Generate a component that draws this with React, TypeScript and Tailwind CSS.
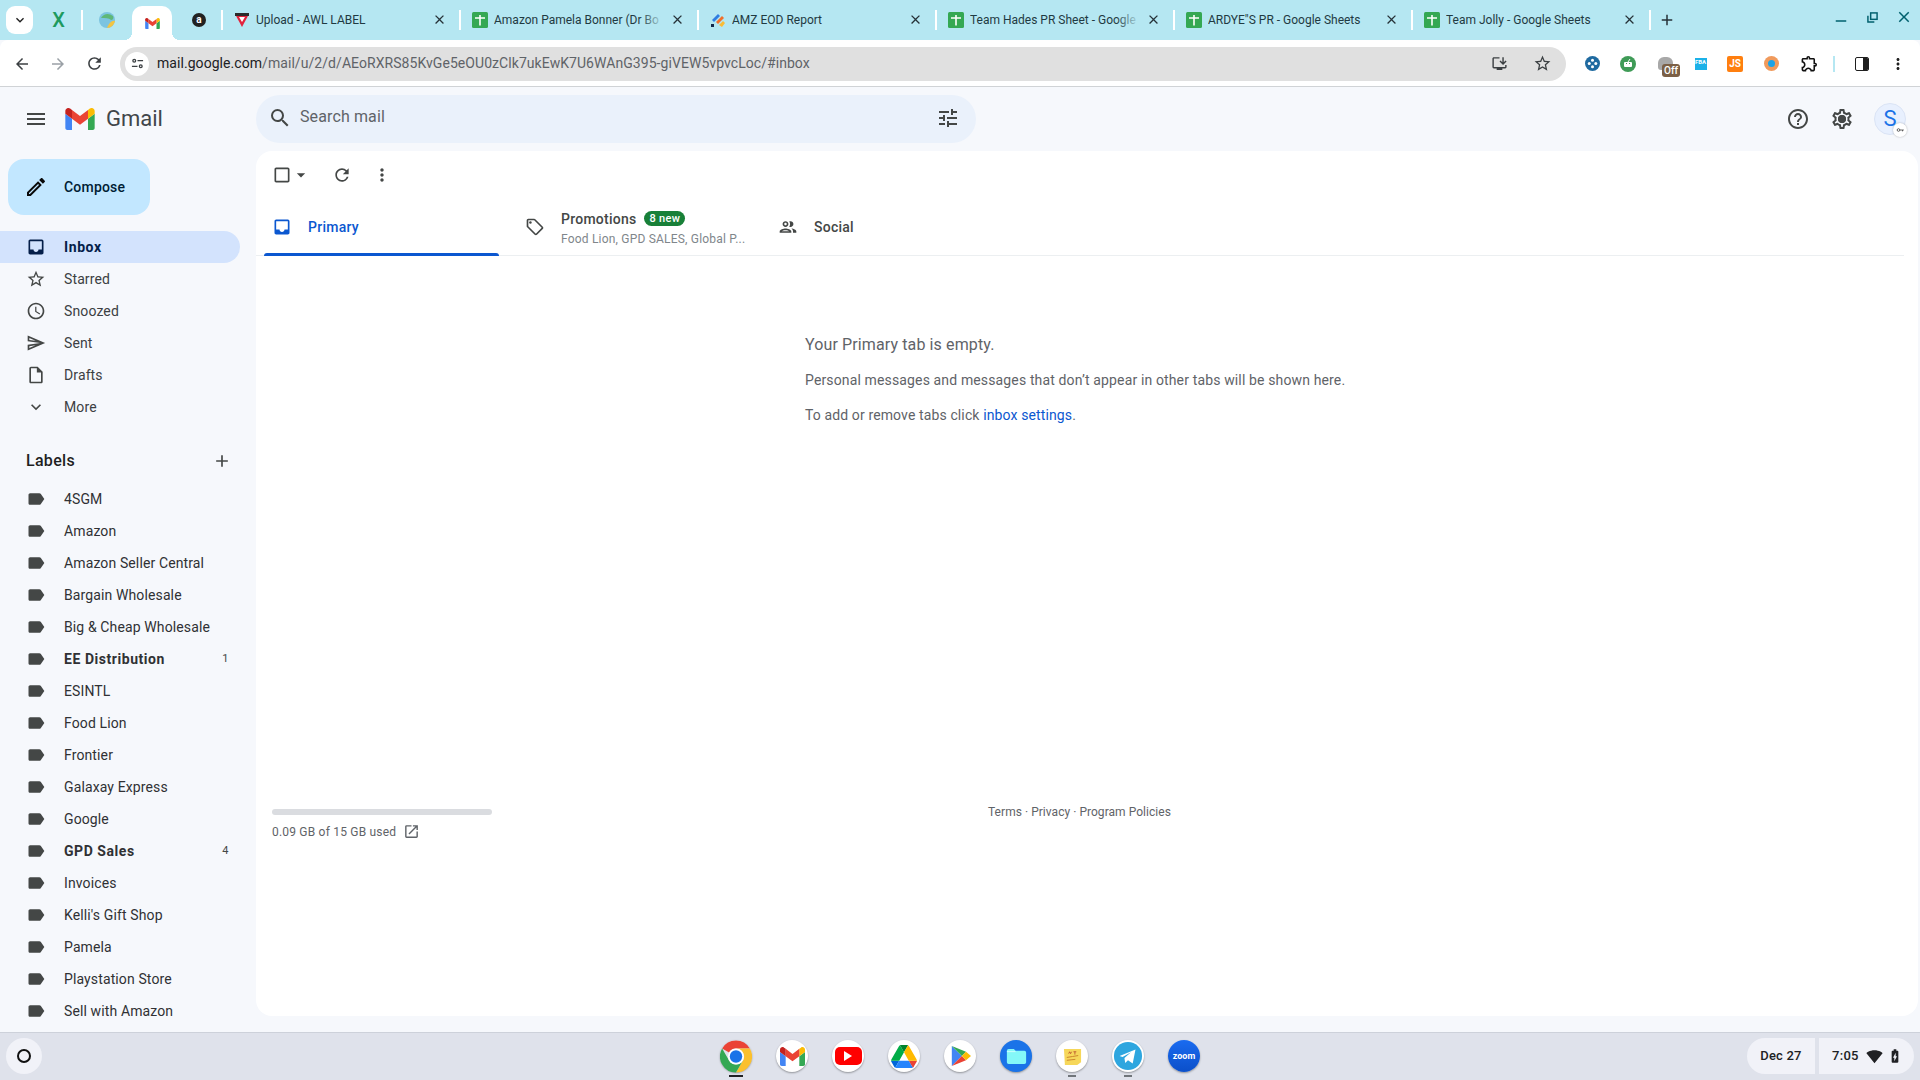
import React from "react";
import {
  MdAdd, MdArrowBack, MdArrowDropDown, MdArrowForward, MdCheckBoxOutlineBlank, MdClose,
  MdExpandMore, MdHelpOutline, MdInbox, MdKeyboardArrowDown, MdLabel, MdMenu, MdMoreVert, MdOpenInNew, MdOutlineAccessTime,
  MdOutlineBatteryChargingFull, MdOutlineEdit, MdOutlineExtension, MdOutlineInsertDriveFile, MdOutlineInstallDesktop, MdOutlineLocalOffer, MdOutlinePeople,
  MdOutlineSend, MdOutlineSettings, MdOutlineStarBorder, MdRefresh, MdRemove, MdSearch, MdSignalWifi4Bar, MdTune,
} from "react-icons/md";

function GmailM({ className }: { className: string }) {
  return (
    <svg viewBox="52 42 88 66" className={className}>
      <path fill="#4285f4" d="M58 108h14V74L52 59v43c0 3.32 2.69 6 6 6" />
      <path fill="#34a853" d="M120 108h14c3.32 0 6-2.69 6-6V59l-20 15" />
      <path fill="#fbbc04" d="M120 48v26l20-15v-8c0-7.42-8.47-11.65-14.4-7.2" />
      <path fill="#ea4335" d="M72 74V48l24 18 24-18v26L96 92" />
      <path fill="#c5221f" d="M52 51v8l20 15V48l-5.6-4.2c-5.94-4.45-14.4-.22-14.4 7.2" />
    </svg>
  );
}

function SheetIcon() {
  return (
    <svg viewBox="0 0 16 16" className="h-4 w-4 shrink-0">
      <rect width="16" height="16" rx="1.5" fill="#34a853" />
      <path d="M3 6h10M8 3v10.500" stroke="#fff" strokeWidth="1.6" />
    </svg>
  );
}

function Tab({ icon, title, fade }: { icon: React.ReactNode; title: string; fade?: boolean }) {
  return (
    <div className="flex h-[40px] w-[238px] shrink-0 items-center pb-[1px]">
      <div className="h-[20px] w-[2px] shrink-0 bg-white" />
      <div className="ml-[11px] flex h-4 w-4 shrink-0 items-center justify-center">{icon}</div>
      <div className="relative ml-[6px] w-[170px] overflow-hidden whitespace-nowrap text-[12px] text-[#1f3a42]">
        {title}
        {fade && <div className="absolute inset-y-0 right-0 w-[24px] bg-gradient-to-l from-[#b5e7f2] to-transparent" />}
      </div>
      <MdClose className="ml-[6px] shrink-0 text-[#263238]" size={15} />
    </div>
  );
}

function Chrome() {
  return (
    <svg viewBox="0 0 32 32" className="h-[33px] w-[33px]">
      <path fill="#ea4335" d="M16 0A16 16 0 0 1 29.86 8H16A8 8 0 0 0 9.07 12L2.14 8A16 16 0 0 1 16 0Z" />
      <path fill="#fbc02d" d="M29.86 8A16 16 0 0 1 16 32L22.93 20A8 8 0 0 0 16 8Z" />
      <path fill="#34a853" d="M16 32A16 16 0 0 1 2.14 8L9.07 20A8 8 0 0 0 22.93 20Z" />
      <circle cx="16" cy="16" r="8" fill="#fff" />
      <circle cx="16" cy="16" r="6.2" fill="#1a73e8" />
    </svg>
  );
}

function Dock({ children, dot, className = "bg-white" }: { children: React.ReactNode; dot?: string; className?: string }) {
  return (
    <div className="relative flex h-[46px] w-[32px] items-center justify-center">
      <div className={`flex h-[32px] w-[32px] items-center justify-center rounded-full shadow-[0_1px_2px_rgba(0,0,0,0.35)] ${className}`}>{children}</div>
      {dot && <div className={`absolute bottom-[2px] left-1/2 h-[2px] -translate-x-1/2 ${dot}`} />}
    </div>
  );
}

const nav = [
  { label: "Starred", Icon: MdOutlineStarBorder },
  { label: "Snoozed", Icon: MdOutlineAccessTime },
  { label: "Sent", Icon: MdOutlineSend },
  { label: "Drafts", Icon: MdOutlineInsertDriveFile },
  { label: "More", Icon: MdKeyboardArrowDown },
];

const labels: [string, string?][] = [
  ["4SGM"], ["Amazon"], ["Amazon Seller Central"], ["Bargain Wholesale"], ["Big & Cheap Wholesale"], ["EE Distribution", "1"],
  ["ESINTL"], ["Food Lion"], ["Frontier"], ["Galaxay Express"], ["Google"], ["GPD Sales", "4"], ["Invoices"],
  ["Kelli's Gift Shop"], ["Pamela"], ["Playstation Store"], ["Sell with Amazon"],
];

export default function App() {
  return (
    <div className="flex h-screen w-full flex-col overflow-hidden bg-[#f6f8fc] font-['Roboto',sans-serif] text-[#202124]">
      {/* Tab strip */}
      <div className="flex h-[40px] shrink-0 items-center bg-[#b5e7f2] pl-[6px]">
        <div className="flex h-[28px] w-[27px] shrink-0 items-center justify-center rounded-[9px] bg-white">
          <MdExpandMore size={16} className="text-[#1f1f1f]" />
        </div>
        <div className="flex h-[40px] w-[50px] shrink-0 items-center justify-end">
          <span className="mr-[16px] text-[20px] font-medium leading-none text-[#1d9a5f]">X</span>
          <div className="h-[20px] w-[2px] bg-white" />
        </div>
        <div className="flex w-[49px] shrink-0 items-center justify-center pr-[2px]">
          <svg viewBox="0 0 16 16" className="h-4 w-4">
            <circle cx="8" cy="8" r="8" fill="#7cc4e0" />
            <path d="M2 6c3-5 8-5 12-2 1 2 0 4-2 4-2-2-6-2-10-2Z" fill="#5fb878" />
            <path d="M8 16c4 0 7-3 8-7-3-1-6 2-8 7Z" fill="#f4c542" />
          </svg>
        </div>
        <div className="relative flex h-[34px] w-[40px] shrink-0 items-center justify-center self-end rounded-t-[10px] bg-white">
          <GmailM className="h-[11px] w-[15px]" />
          <div className="absolute bottom-0 -left-[8px] h-[8px] w-[8px] bg-[radial-gradient(circle_at_0_0,#b5e7f2_8px,#fff_8px)]" />
          <div className="absolute bottom-0 -right-[8px] h-[8px] w-[8px] bg-[radial-gradient(circle_at_100%_0,#b5e7f2_8px,#fff_8px)]" />
        </div>
        <div className="flex w-[49px] shrink-0 items-center justify-end">
          <div className="mr-[15px] flex h-[14px] w-[14px] items-center justify-center rounded-full bg-[#222] text-[10px] font-bold leading-none text-white">a</div>
        </div>
        <Tab
          title="Upload - AWL LABEL"
          icon={
            <svg viewBox="0 0 16 16" className="h-4 w-4">
              <path d="M1 2h14l-7 13Z" fill="#e2233d" />
              <path d="M1 1h14v3H1Z" fill="#2b2b2b" />
              <path d="M5 5h6L8 10Z" fill="#fff" />
            </svg>
          }
        />
        <Tab title="Amazon Pamela Bonner (Dr Bo" fade icon={<SheetIcon />} />
        <Tab
          title="AMZ EOD Report"
          icon={
            <svg viewBox="0 0 16 16" className="h-4 w-4">
              <path d="M2 8l6-6 2 2-6 6Z" fill="#2f7de1" />
              <path d="M6 10l6-6 2 2-6 6Z" fill="#f2702a" />
              <path d="M9 13l4-4 2 2-3 4Z" fill="#fbbc34" />
              <path d="M1 12h3v3H1Z" fill="#12284c" />
            </svg>
          }
        />
        <Tab title="Team Hades PR Sheet - Google" fade icon={<SheetIcon />} />
        <Tab title={'ARDYE"S PR - Google Sheets'} icon={<SheetIcon />} />
        <Tab title="Team Jolly - Google Sheets" icon={<SheetIcon />} />
        <div className="h-[20px] w-[2px] shrink-0 bg-white" />
        <MdAdd size={18} className="ml-[7px] shrink-0 text-[#263238]" />
        <div className="ml-auto flex h-[40px] items-center pb-[2px] text-[#00606e]">
          <MdRemove size={18} className="mr-[17px] mt-[4px]" />
          <svg viewBox="0 0 12 12" className="mr-[17px] mb-[4px] h-[11px] w-[11px]" fill="none" stroke="currentColor" strokeWidth="1.6">
            <rect x="4" y="1" width="7" height="7" />
            <path d="M1 4v7h7" />
          </svg>
          <MdClose size={18} className="mr-[7px] mb-[4px]" />
        </div>
      </div>

      {/* Toolbar */}
      <div className="flex h-[47px] shrink-0 items-center rounded-t-[8px] border-b border-[#d0d3d6] bg-white pt-[1px]">
        <div className="flex w-[120px] shrink-0 items-center text-[#3c4043]">
          <MdArrowBack size={18} className="ml-[13px]" />
          <MdArrowForward size={18} className="ml-[18px] text-[#9aa0a6]" />
          <MdRefresh size={19} className="ml-[18px]" />
        </div>
        <div className="flex h-[34px] w-[1446px] shrink-0 items-center rounded-full bg-[#e0e0e0] pl-[5px] pr-[14px]">
          <div className="flex h-[24px] w-[24px] shrink-0 items-center justify-center rounded-full bg-white">
            <svg viewBox="0 0 14 14" className="h-[13px] w-[13px]" fill="none" stroke="#3c4043" strokeWidth="1.4">
              <circle cx="3.500" cy="4" r="1.500" />
              <path d="M7 4h6M1 10h6" />
              <circle cx="10.500" cy="10" r="1.500" />
            </svg>
          </div>
          <div className="ml-[8px] text-[14px] tracking-[0.06px] text-[#5f6368]">
            <span className="text-[#202124]">mail.google.com</span>/mail/u/2/d/AEoRXRS85KvGe5eOU0zClk7ukEwK7U6WAnG395-giVEW5vpvcLoc/#inbox
          </div>
          <MdOutlineInstallDesktop size={17} className="ml-auto mr-[25px] text-[#3c4043]" />
          <MdOutlineStarBorder size={19} className="text-[#3c4043]" />
        </div>
        <div className="ml-[8px] flex items-center">
          <div className="flex w-[36px] justify-center">
            <svg viewBox="0 0 16 16" className="h-[15px] w-[15px]">
              <circle cx="8" cy="8" r="8" fill="#1f6aa0" />
              <circle cx="8" cy="4.5" r="1.6" fill="#fff" />
              <circle cx="8" cy="11.5" r="1.6" fill="#fff" />
              <circle cx="4.5" cy="8" r="1.6" fill="#fff" />
              <circle cx="11.5" cy="8" r="1.6" fill="#fff" />
            </svg>
          </div>
          <div className="flex w-[36px] justify-center">
            <svg viewBox="0 0 16 16" className="h-4 w-4">
              <circle cx="8" cy="8" r="8" fill="#3f9b57" />
              <rect x="4" y="6" width="8" height="5" rx="1" fill="#fff" />
              <path d="M6 7.5h1M9 7.5h1" stroke="#3f9b57" strokeWidth="1" />
              <path d="M8 6l2-3" stroke="#fff" strokeWidth="1" />
            </svg>
          </div>
          <div className="relative flex w-[38px] justify-center">
            <div className="h-[13px] w-[15px] rounded-b-[3px] rounded-t-[6px] bg-[#a8a8a8]" />
            <div className="absolute -bottom-[7px] left-[16px] rounded-[3px] bg-[#7b5f45] px-[2px] text-[10px] font-medium leading-[13px] text-white">Off</div>
          </div>
          <div className="flex w-[33px] justify-center">
            <div className="flex h-[12px] w-[12px] items-start justify-center bg-[#1bb1e8] text-[6px] font-bold leading-[7px] text-white">FBA</div>
          </div>
          <div className="flex w-[36px] justify-center">
            <div className="flex h-[16px] w-[16px] items-center justify-center rounded-[2px] bg-[#ff7f0f] text-[10px] font-bold text-white">JS</div>
          </div>
          <div className="flex w-[36px] justify-center">
            <div className="flex h-[15px] w-[15px] items-center justify-center rounded-full bg-[#f09a5c]">
              <div className="h-[7px] w-[7px] rounded-full bg-[#1aa3e8]" />
            </div>
          </div>
          <div className="ml-[2px] flex w-[36px] justify-center">
            <MdOutlineExtension size={19} className="text-[#111]" />
          </div>
          <div className="ml-[6px] h-[16px] w-[2px] bg-[#b5e7f2]" />
          <div className="ml-[20px] flex h-[14px] w-[14px] overflow-hidden rounded-[2px] border-[1.5px] border-[#1f1f1f]">
            <div className="flex-1" />
            <div className="w-[5px] bg-[#1f1f1f]" />
          </div>
          <MdMoreVert size={18} className="ml-[20px] text-[#1f1f1f]" />
        </div>
      </div>

      {/* Gmail */}
      <div className="flex min-h-0 flex-1 tracking-[0.12px]">
        {/* Sidebar */}
        <div className="w-[256px] shrink-0 overflow-hidden">
          <div className="flex h-[64px] items-center pl-[24px]">
            <MdMenu size={24} className="text-[#444746]" />
            <GmailM className="ml-[17px] h-[22px] w-[30px]" />
            <span className="ml-[11px] text-[22px] leading-none tracking-normal text-[#41464a]">Gmail</span>
          </div>
          <div className="ml-[8px] mt-[8px] flex h-[56px] w-[142px] items-center rounded-[16px] bg-[#c2e7ff] pl-[16px] text-[14px] font-medium tracking-[0.2px] text-[#001d35]">
            <MdOutlineEdit size={24} className="text-[#0a0a0a]" />
            <span className="ml-[16px]">Compose</span>
          </div>
          <div className="mt-[16px] flex h-[32px] w-[240px] items-center rounded-r-full bg-[#d3e3fd] pl-[26px] text-[14px] font-bold tracking-[0.6px] text-[#041e49]">
            <MdInbox size={20} />
            <span className="ml-[18px]">Inbox</span>
          </div>
          {nav.map(({ label, Icon }) => (
            <div key={label} className="flex h-[32px] items-center pl-[26px] text-[14px] text-[#3c4043]">
              <Icon size={20} className="text-[#444746]" />
              <span className="ml-[18px]">{label}</span>
            </div>
          ))}
          <div className="mt-[18px] flex h-[40px] w-[240px] items-center justify-between pl-[26px] pr-[8px] text-[16px] font-medium tracking-[0.3px] text-[#1f1f1f]">
            <span>Labels</span>
            <MdAdd size={20} className="text-[#444746]" />
          </div>
          <div className="mt-[2px]">
            {labels.map(([name, count]) => (
              <div key={name} className={`flex h-[32px] w-[240px] items-center pl-[26px] pr-[11px] text-[14px] text-[#303134] ${count ? "font-bold tracking-[0.55px]" : ""}`}>
                <MdLabel size={20} className="text-[#444746]" />
                <span className="ml-[18px]">{name}</span>
                {count && <span className="ml-auto text-[11px] font-normal text-[#444746]">{count}</span>}
              </div>
            ))}
          </div>
        </div>

        {/* Right side */}
        <div className="flex min-w-0 flex-1 flex-col pr-[2px]">
          <div className="flex h-[64px] shrink-0 items-center">
            <div className="flex h-[48px] w-[720px] items-center rounded-full bg-[#eaf1fb] pl-[12px] pr-[16px] text-[#444746]">
              <MdSearch size={24} className="-mt-[2px]" />
              <span className="ml-[8px] -mt-[4px] text-[16px] text-[#5f6368]">Search mail</span>
              <MdTune size={24} className="ml-auto -mt-[2px]" />
            </div>
            <div className="ml-auto flex items-center text-[#444746]">
              <MdHelpOutline size={24} className="mr-[20px]" />
              <div className="relative mr-[20px] flex h-[24px] w-[24px] items-center justify-center">
                <MdOutlineSettings size={24} />
                <div className="absolute h-[8px] w-[8px] rounded-full bg-[#444746]" />
              </div>
              <div className="relative mr-[12px] flex h-[32px] w-[32px] items-center justify-center rounded-full border border-[#dbe4f5] bg-[#e8f0fe] text-[22px] leading-none text-[#1a73e8]">
                S
                <div className="absolute -bottom-[3px] -right-[2px] flex h-[14px] w-[14px] items-center justify-center rounded-full bg-white shadow-[0_0_2px_rgba(0,0,0,0.3)]">
                  <svg viewBox="0 0 12 6" className="h-[4px] w-[9px]" fill="none" stroke="#444" strokeWidth="1.2">
                    <circle cx="3" cy="3" r="2" />
                    <path d="M5 3h6M9 3v2" />
                  </svg>
                </div>
              </div>
            </div>
          </div>
          <div className="mb-[16px] flex min-h-0 flex-1 flex-col rounded-[16px] bg-white">
            <div className="flex h-[48px] shrink-0 items-center pl-[16px] text-[#444746]">
              <MdCheckBoxOutlineBlank size={20} />
              <MdArrowDropDown size={20} className="ml-[-1px]" />
              <MdRefresh size={20} className="ml-[21px]" />
              <MdMoreVert size={20} className="ml-[20px]" />
            </div>
            <div className="mr-[14px] flex h-[57px] shrink-0 border-b border-[#eceff1]">
              <div className="relative ml-[8px] flex h-[56px] w-[235px] items-center pl-[8px] text-[14px] font-medium tracking-[0.25px] text-[#0b57d0]">
                <MdInbox size={20} />
                <span className="ml-[16px]">Primary</span>
                <div className="absolute -bottom-[1px] left-0 right-0 h-[3px] rounded-t-[3px] bg-[#0b57d0]" />
              </div>
              <div className="flex w-[254px] items-center pl-[26px] text-[#5f6368]">
                <MdOutlineLocalOffer size={20} className="text-[#444746]" />
                <div className="ml-[16px] flex flex-col pt-[2px]">
                  <div className="flex items-center text-[14px] font-medium leading-[20px] tracking-[0.25px] text-[#444746]">
                    Promotions
                    <span className="ml-[8px] rounded-full bg-[#188038] px-[5px] text-[11px] font-medium leading-[15px] tracking-[0.3px] text-white">8 new</span>
                  </div>
                  <div className="mt-[1px] whitespace-nowrap text-[12px] leading-[18px] tracking-[0.2px] text-[#80868b]">Food Lion, GPD SALES, Global P...</div>
                </div>
              </div>
              <div className="flex items-center pl-[25px] text-[14px] font-medium tracking-[0.25px] text-[#444746]">
                <MdOutlinePeople size={20} />
                <span className="ml-[16px]">Social</span>
              </div>
            </div>
            <div className="flex min-h-0 flex-1 flex-col pl-[549px] pt-[77px] text-[#5f6368]">
              <div className="text-[16px] leading-[24px]">Your Primary tab is empty.</div>
              <div className="mt-[13px] text-[14px] leading-[20px] tracking-[0.14px]">Personal messages and messages that don’t appear in other tabs will be shown here.</div>
              <div className="mt-[15px] text-[14px] leading-[20px]">
                To add or remove tabs click <span className="text-[#0b57d0]">inbox settings</span>.
              </div>
            </div>
            <div className="flex h-[207px] shrink-0 pl-[16px] text-[12px] text-[#5f6368]">
              <div className="w-[220px]">
                <div className="h-[6px] rounded-full bg-[#dadce0]" />
                <div className="mt-[9px] flex items-center leading-[16px] tracking-[0.2px]">
                  0.09 GB of 15 GB used
                  <MdOpenInNew size={17} className="ml-[7px] -mt-[1px]" />
                </div>
              </div>
              <div className="ml-[496px] -mt-[5px] leading-[16px] tracking-[0.04px]">Terms · Privacy · Program Policies</div>
            </div>
          </div>
        </div>
      </div>

      {/* Taskbar */}
      <div className="grid h-[48px] shrink-0 grid-cols-[1fr_auto_1fr] items-center border-t border-[#cdd1da] bg-[#dfe2eb] pb-[1px]">
        <div className="pl-[6px]">
          <div className="flex h-[36px] w-[36px] items-center justify-center rounded-full bg-[#f1f2f8]">
            <div className="h-[14px] w-[14px] rounded-full border-[2.5px] border-[#111]" />
          </div>
        </div>
        <div className="flex items-center gap-[24px]">
          <Dock className="bg-transparent" dot="w-[14px] bg-[#202124]"><Chrome /></Dock>
          <Dock><GmailM className="h-[19px] w-[25px]" /></Dock>
          <Dock>
            <div className="flex h-[18px] w-[27px] items-center justify-center rounded-[5px] bg-[#f00]">
              <div className="h-0 w-0 border-y-[5px] border-l-[8px] border-y-transparent border-l-white" />
            </div>
          </Dock>
          <Dock>
            <svg viewBox="0 0 87.3 78" className="h-[23px] w-[26px]">
              <path d="m6.6 66.85 3.85 6.65c.8 1.4 1.95 2.5 3.3 3.3l13.75-23.8h-27.5c0 1.55.4 3.1 1.2 4.5z" fill="#0066da" />
              <path d="m43.65 25-13.75-23.8c-1.35.8-2.5 1.9-3.3 3.3l-25.4 44a9.06 9.06 0 0 0 -1.2 4.5h27.5z" fill="#00ac47" />
              <path d="m73.55 76.8c1.35-.8 2.5-1.9 3.3-3.3l1.6-2.75 7.65-13.25c.8-1.4 1.2-2.95 1.2-4.5h-27.502l5.852 11.5z" fill="#ea4335" />
              <path d="m43.65 25 13.75-23.8c-1.35-.8-2.9-1.2-4.5-1.2h-18.5c-1.6 0-3.15.45-4.5 1.2z" fill="#00832d" />
              <path d="m59.8 53h-32.3l-13.75 23.8c1.35.8 2.9 1.2 4.5 1.2h50.8c1.6 0 3.15-.45 4.5-1.2z" fill="#2684fc" />
              <path d="m73.4 26.5-12.7-22c-.8-1.4-1.95-2.5-3.3-3.3l-13.75 23.8 16.15 28h27.45c0-1.55-.4-3.1-1.2-4.5z" fill="#ffba00" />
            </svg>
          </Dock>
          <Dock>
            <svg viewBox="0 0 24 26" className="ml-[2px] h-[22px] w-[20px]">
              <path d="M1 1v24l12-12Z" fill="#4285f4" />
              <path d="M1 1l12 12 5-5Z" fill="#34a853" />
              <path d="M1 25l12-12 5 5Z" fill="#ea4335" />
              <path d="M18 8l6 5-6 5-5-5Z" fill="#fbbc04" />
            </svg>
          </Dock>
          <Dock className="bg-[#1a73e8]">
            <svg viewBox="0 0 24 20" className="h-[18px] w-[21px]">
              <path d="M1 4a2 2 0 0 1 2-2h6l2 2h10a2 2 0 0 1 2 2v11a2 2 0 0 1-2 2H3a2 2 0 0 1-2-2Z" fill="#84f8f8" />
              <path d="M1 5h10" stroke="#d8ffff" strokeWidth="1" />
            </svg>
          </Dock>
          <Dock dot="w-[8px] bg-[#70757a]">
            <svg viewBox="0 0 20 20" className="h-[19px] w-[19px]">
              <path d="M1 2h18v14l-4 3H2Z" fill="#f6d75a" />
              <path d="M4 11c4-1 8-1 12-2M4 14c3 0 6-1 9-1" stroke="#c9832a" strokeWidth="1" fill="none" />
              <path d="M6 7l1-2 1 2 1-2M11 5h3M12.500 5v3" stroke="#b5452a" strokeWidth=".8" fill="none" />
            </svg>
          </Dock>
          <Dock dot="w-[8px] bg-[#70757a]">
            <svg viewBox="0 0 32 32" className="h-[30px] w-[30px]">
              <circle cx="16" cy="16" r="15" fill="#2ea6df" />
              <path d="M7 16l17-7-3 15-5-3.500-3 3-.8-5.500 7-6-9 5Z" fill="#fff" />
            </svg>
          </Dock>
          <Dock className="rounded-[12px] bg-gradient-to-b from-[#1a6bf0] to-[#0b4fc9]">
            <span className="text-[9px] font-bold leading-none text-white">zoom</span>
          </Dock>
        </div>
        <div className="flex items-center justify-end pr-[6px]">
          <div className="flex h-[36px] w-[68px] items-center justify-center rounded-l-full rounded-r-[4px] bg-[#f1f2f8] text-[13px] font-medium tracking-[0.2px] text-[#202124]">Dec 27</div>
          <div className="ml-[4px] flex h-[36px] w-[95px] items-center rounded-l-[4px] rounded-r-full bg-[#f1f2f8] pl-[13px] text-[13px] font-medium tracking-[0.3px] text-[#202124]">
            7:05
            <MdSignalWifi4Bar size={17} className="ml-[7px]" />
            <MdOutlineBatteryChargingFull size={16} className="ml-[4px]" />
          </div>
        </div>
      </div>
    </div>
  );
}
